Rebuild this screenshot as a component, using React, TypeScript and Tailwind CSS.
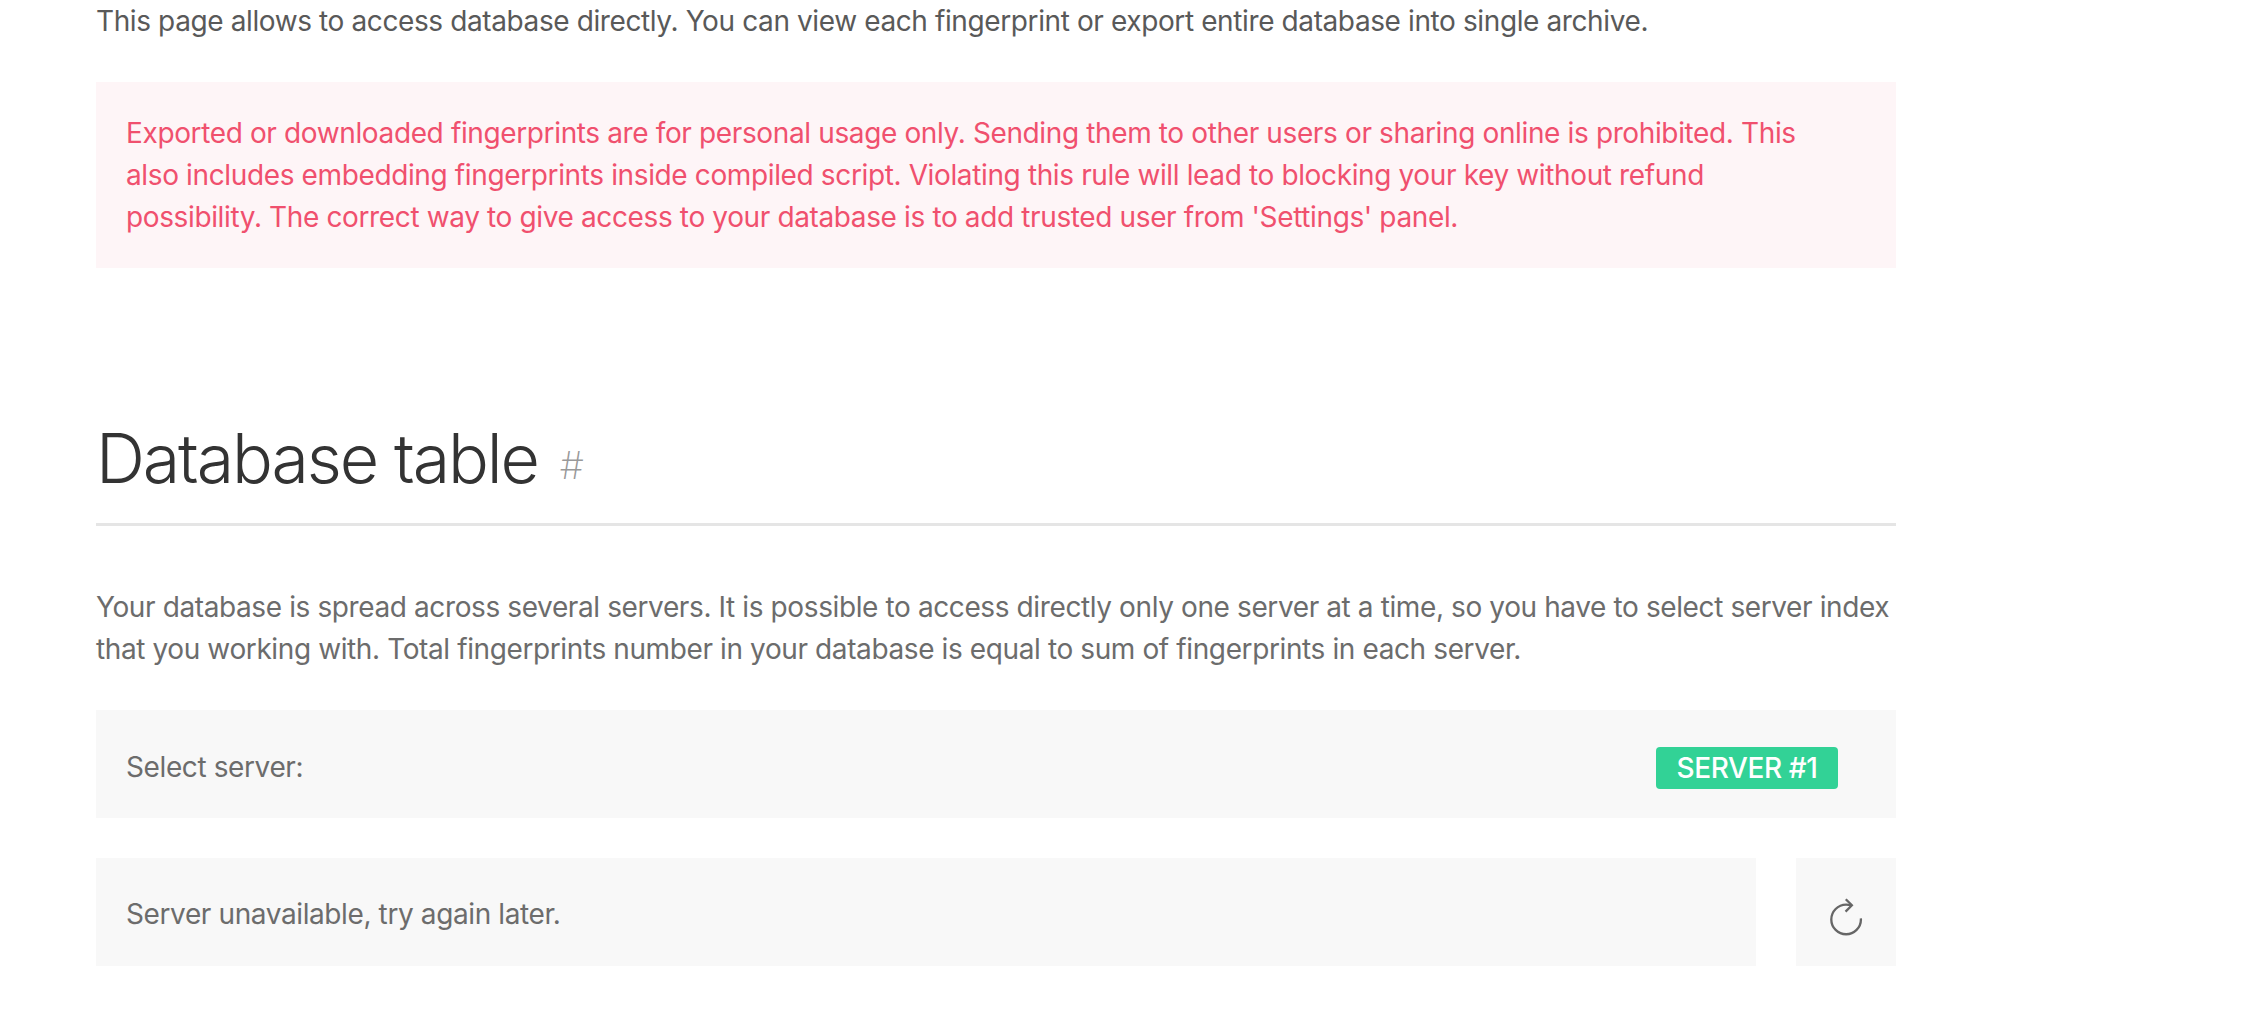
export default function App() {
  return (
    <div className="h-[1020px] overflow-hidden bg-white font-['Inter',sans-serif] text-[28px] leading-[42px] tracking-[-0.39px] text-[#6c6c6c]">
      <div className="w-[1800px] ml-[96px]">
        <p className="text-[#595959]">
          This page allows to access database directly. You can view each fingerprint or export entire database into single archive.
        </p>
        <div className="mt-[40px] h-[186px] bg-[#fef5f7] pl-[30px] pr-[60px] py-[30px] tracking-[-0.37px] text-[#f0506e]">
          Exported or downloaded fingerprints are for personal usage only. Sending them to other users or sharing online is prohibited. This also includes embedding fingerprints inside compiled script. Violating this rule will lead to blocking your key without refund possibility. The correct way to give access to your database is to add trusted user from 'Settings' panel.
        </div>

        <h1 className="mt-[140px] h-[118px] border-b-[3px] border-[#e5e5e5] text-[68px] leading-[100px] tracking-[-2.1px] font-light text-[#333333]">
          Database table
          <span className="ml-[22px] align-[4px] text-[38px] font-extralight tracking-normal text-[#999999]">#</span>
        </h1>

        <p className="mt-[60px]">
          Your database is spread across several servers. It is possible to access directly only one server at a time, so you have to select server index that you working with. Total fingerprints number in your database is equal to sum of fingerprints in each server.
        </p>

        <div className="mt-[40px] flex h-[108px] items-center justify-between bg-[#f8f8f8] pl-[30px] pr-[58px] pt-[8px]">
          <span className="-mt-[2px]">Select server:</span>
          <span className="flex h-[42px] w-[182px] items-center justify-center rounded-[4px] bg-[#32d296] font-medium text-white">
            SERVER #1
          </span>
        </div>

        <div className="mt-[40px] flex gap-[40px]">
          <div className="flex h-[108px] flex-1 items-center bg-[#f8f8f8] px-[30px] pt-[3px]">
            Server unavailable, try again later.
          </div>
          <div className="flex h-[108px] w-[100px] items-center justify-center bg-[#f8f8f8] pt-[8px]">
            <svg width="42" height="42" viewBox="0 0 20 20" className="text-[#666666]">
              <path
                fill="none"
                stroke="currentColor"
                strokeWidth="1.1"
                d="M17.08,11.15 C17.09,11.31 17.1,11.47 17.1,11.64 C17.1,15.53 13.94,18.69 10.05,18.69 C6.16,18.68 3,15.53 3,11.63 C3,7.74 6.16,4.58 10.05,4.58 C10.9,4.58 11.71,4.73 12.46,5"
              />
              <polyline fill="none" stroke="currentColor" strokeWidth="1.1" points="9.9 2 12.79 4.89 9.79 7.9" />
            </svg>
          </div>
        </div>
      </div>
    </div>
  );
}
